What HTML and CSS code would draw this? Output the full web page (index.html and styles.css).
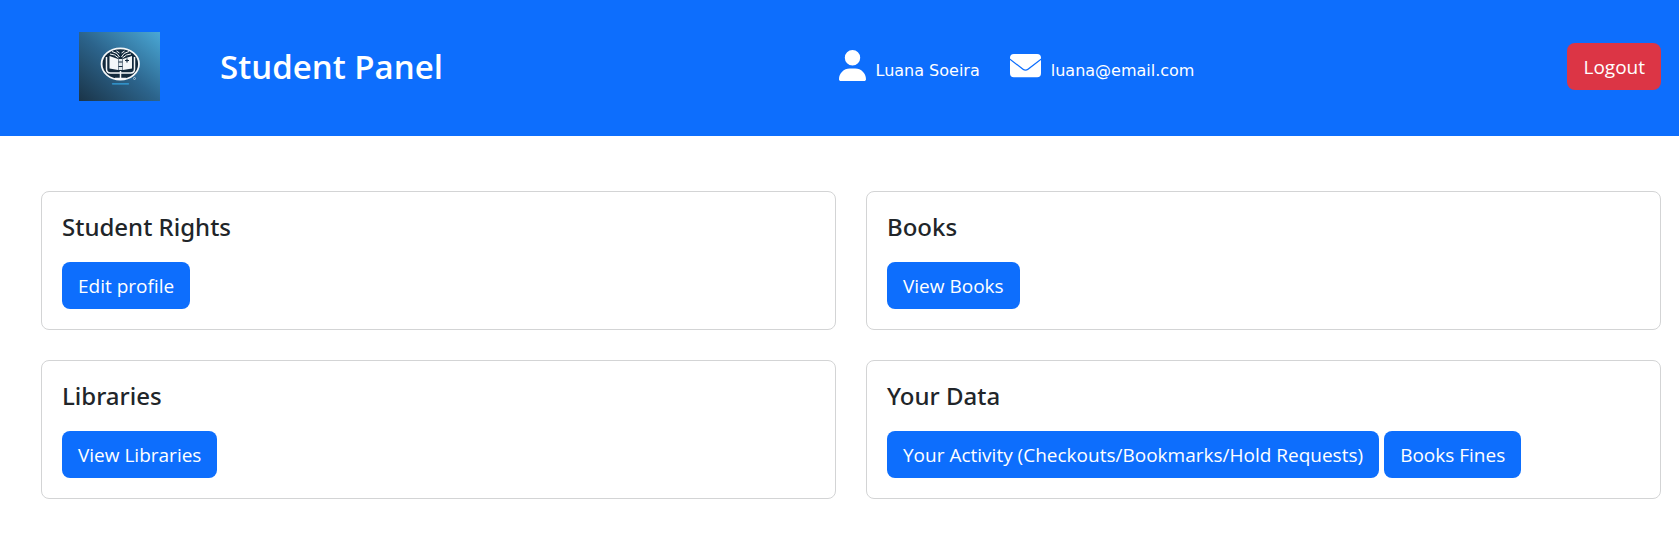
FILE: index.html
```html
<!DOCTYPE html>
<html lang="en">
<head>
<meta charset="utf-8">
<meta name="viewport" content="width=device-width, initial-scale=1">
<title>Student Panel</title>
<link rel="stylesheet" href="styles.css">
</head>
<body>
<header class="topbar">
  <div class="brand">
    <svg class="logo" viewBox="0 0 81 69" role="img" aria-label="Library logo">
      <defs>
        <linearGradient id="sky" x1="0" y1="1" x2="1" y2="0">
          <stop offset="0" stop-color="#1a3448"/>
          <stop offset="0.5" stop-color="#2c648c"/>
          <stop offset="1" stop-color="#4aa8d6"/>
        </linearGradient>
      </defs>
      <rect width="81" height="69" fill="url(#sky)"/>
      <ellipse cx="41.300" cy="32" rx="18.700" ry="15.700" fill="#12293c" stroke="#f4f7f9" stroke-width="1.800"/>
      <path d="M27.500 25v12q0 4 4 4h20q4 0 4-4V25M41.500 39v8M36 46.500h11" fill="none" stroke="#f4f7f9" stroke-width="1.500"/>
      <path d="M30.500 24l8.500 3v11l-8.500-1.500zM53 24l-9 3v11l9-1.500z" fill="#f4f7f9"/>
      <path d="M39.500 27h4v11h-4z" fill="#dfe7ec"/>
      <path d="M39.500 30h4M39.500 34.500h4M48 26.500v4M46 28.500h4" stroke="#12293c" stroke-width="1.200"/>
      <path d="M31 22l4.500 1 4 3M33 19.500l5 2 2.500 3.500M52 22l-4.500 1-4 3M50 19.500l-5 2-2.500 3.500M37.500 19l3 2M45.500 19l-3 2" fill="none" stroke="#f4f7f9" stroke-width="1"/>
      <circle cx="55.500" cy="46.500" r="1" fill="none" stroke="#c8dae6" stroke-width="0.700"/>
      <path d="M33.500 51.800h16" stroke="#35a3df" stroke-width="1.300" stroke-linecap="round"/>
    </svg>
    <h1 class="title">Student Panel</h1>
  </div>
  <div class="account">
    <ul class="contacts">
      <li class="contact">
        <svg class="icon-user" viewBox="0 0 448 512" aria-hidden="true"><path fill="currentColor" d="M224 256A128 128 0 1 0 224 0a128 128 0 1 0 0 256zm-45.700 48C79.800 304 0 383.800 0 482.300C0 498.700 13.300 512 29.700 512H418.300c16.400 0 29.700-13.300 29.700-29.700C448 383.800 368.200 304 269.700 304H178.300z"/></svg>
        <span class="contact-text">Luana Soeira</span>
      </li>
      <li class="contact">
        <svg class="icon-mail" viewBox="0 0 512 512" aria-hidden="true"><path fill="currentColor" d="M64 64h384a64 64 0 0 1 64 64v12L290 311c-20 15-48 15-68 0L0 140v-12a64 64 0 0 1 64-64zM0 165l208 160c28 22 68 22 96 0l208-160v219a64 64 0 0 1-64 64H64a64 64 0 0 1-64-64z"/></svg>
        <span class="contact-text">luana@email.com</span>
      </li>
    </ul>
    <button class="btn btn-danger" type="button">Logout</button>
  </div>
</header>
<main class="cards">
  <section class="card">
    <h2 class="card-title">Student Rights</h2>
    <div class="actions"><a class="btn btn-primary" href="#profile">Edit profile</a></div>
  </section>
  <section class="card">
    <h2 class="card-title">Books</h2>
    <div class="actions"><a class="btn btn-primary" href="#books">View Books</a></div>
  </section>
  <section class="card">
    <h2 class="card-title">Libraries</h2>
    <div class="actions"><a class="btn btn-primary" href="#libraries">View Libraries</a></div>
  </section>
  <section class="card">
    <h2 class="card-title">Your Data</h2>
    <div class="actions">
      <a class="btn btn-primary" href="#activity">Your Activity (Checkouts/Bookmarks/Hold Requests)</a>
      <a class="btn btn-primary" href="#fines">Books Fines</a>
    </div>
  </section>
</main>
</body>
</html>
```

FILE: styles.css
```css
* {
  box-sizing: border-box;
}

body {
  margin: 0;
  background: #fff;
  color: #212529;
  font-family: "Open Sans", "Noto Sans", sans-serif;
  font-size: 19px;
  line-height: 30px;
}

h1,
h2,
ul {
  margin: 0;
  padding: 0;
}

.topbar {
  display: grid;
  grid-template-columns: 1fr 1fr;
  align-items: center;
  padding: 32px 18px 35px 0;
  background: #0d6efd;
  color: #fff;
}

.brand {
  display: flex;
  align-items: center;
  gap: 60px;
  padding-left: 79px;
}

.logo {
  width: 81px;
  height: 69px;
}

.title {
  font-size: 33px;
  font-weight: 600;
  line-height: 40px;
}

.account {
  display: flex;
  align-items: center;
  justify-content: space-between;
  padding-left: 8px;
}

.contacts {
  display: flex;
  gap: 30px;
  list-style: none;
}

.contact {
  display: flex;
  align-items: flex-start;
  gap: 10px;
}

.icon-user {
  width: 27px;
  height: 31px;
}

.icon-mail {
  width: 31px;
  height: 31px;
}

.contact-text {
  padding-top: 9px;
  font-family: "DejaVu Sans", sans-serif;
  font-size: 16px;
  line-height: 24px;
}

.btn {
  display: inline-block;
  padding: 9px 15px 7px;
  border: 1px solid transparent;
  border-radius: 8px;
  color: #fff;
  font: inherit;
  line-height: 29px;
  text-decoration: none;
  cursor: pointer;
}

.btn-primary {
  background: #0d6efd;
}

.btn-danger {
  background: #dc3545;
}

.cards {
  display: grid;
  grid-template-columns: 1fr 1fr;
  gap: 30px;
  padding: 55px 18px 52px 41px;
}

.card {
  padding: 20px;
  border: 1px solid #d3d4d5;
  border-radius: 8px;
}

.card-title {
  margin-bottom: 20px;
  font-family: "Noto Sans", "Open Sans", sans-serif;
  font-size: 24px;
  font-weight: 500;
  line-height: 30px;
}

.actions {
  display: flex;
  flex-wrap: wrap;
  gap: 5px;
}
```
